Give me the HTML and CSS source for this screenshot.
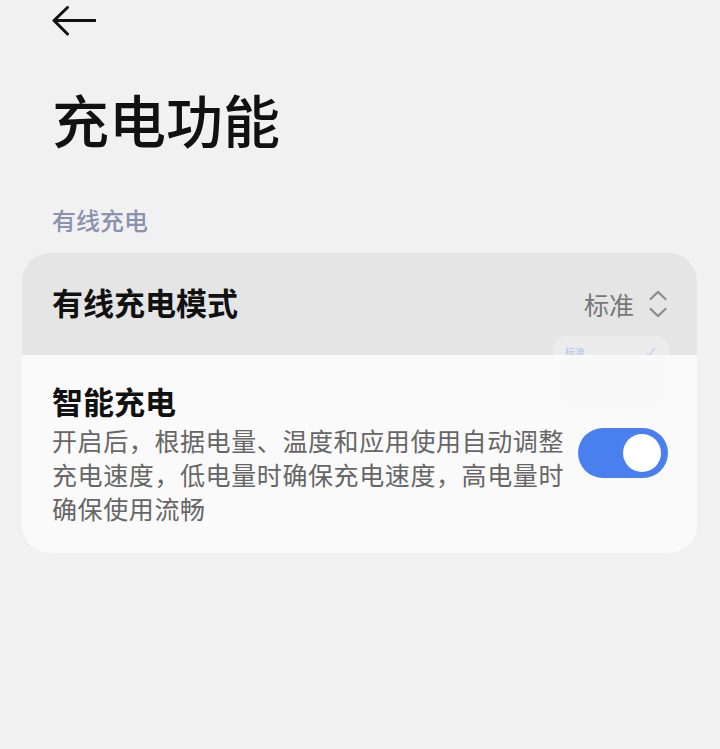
FILE: index.html
```html
<!DOCTYPE html>
<html lang="zh-CN">
<head>
    <meta charset="UTF-8">
    <meta name="viewport" content="width=device-width, initial-scale=1.0">
    <title>充电功能</title>
    <link rel="stylesheet" href="styles.css">
</head>
<body>
    <header class="top-bar">
        <svg class="back-icon" width="44" height="30" viewBox="0 0 44 30">
            <path d="M2 14.5 H43 M15.5 1.5 L2 14.5 L15.5 28" fill="none" stroke="#111" stroke-width="3" stroke-linecap="round" stroke-linejoin="round"/>
        </svg>
    </header>

    <h1 class="page-title">充电功能</h1>

    <p class="section-label">有线充电</p>

    <div class="card">
        <div class="row row-select">
            <span class="row-title">有线充电模式</span>
            <span class="row-value">
                标准
                <svg class="updown" width="20" height="30" viewBox="0 0 20 30">
                    <path d="M2.5 10 L10 3 L17.5 10 M2.5 20 L10 27 L17.5 20" fill="none" stroke="#8a8a8a" stroke-width="2.2" stroke-linecap="round" stroke-linejoin="round"/>
                </svg>
            </span>
        </div>

        <!-- 下拉菜单淡出残影 -->
        <div class="ghost-menu">
            <span>标准</span>
            <span class="ghost-check">✓</span>
        </div>

        <div class="row row-switch">
            <div class="row-text">
                <div class="row-title">智能充电</div>
                <div class="row-desc">开启后，根据电量、温度和应用使用自动调整充电速度，低电量时确保充电速度，高电量时确保使用流畅</div>
            </div>
            <div class="switch on">
                <span class="knob"></span>
            </div>
        </div>
    </div>
</body>
</html>
```

FILE: styles.css
```css
body {
    margin: 0;
    background-color: #f1f1f1;
    font-family: "Noto Sans CJK SC", "Noto Sans", sans-serif;
    color: #111111;
}
.top-bar {
    height: 50px;
    padding-left: 52px;
}
.back-icon {
    display: block;
    margin-top: 6px;
}
.page-title {
    margin: 27px 0 0 52px;
    font-size: 57px;
    line-height: 70px;
    font-weight: 500;
}
.section-label {
    margin: 51px 0 0 52px;
    font-size: 24px;
    line-height: 32px;
    font-weight: 500;
    color: #8a93ae;
}
.card {
    position: relative;
    margin: 17px 23px 0 22px;
    border-radius: 28px;
    overflow: hidden;
    background-color: #fafafa;
}
.row {
    display: flex;
    align-items: center;
    justify-content: space-between;
    padding: 0 29px 0 30px;
}
.row-select {
    height: 102px;
    box-sizing: border-box;
    padding-bottom: 5px;
    background-color: #e5e5e5;
}
.row-title {
    font-size: 31px;
    line-height: 40px;
    font-weight: 700;
    color: #111111;
}
.row-value {
    display: flex;
    align-items: center;
    gap: 14px;
    font-size: 25px;
    color: #777777;
    padding-top: 4px;
}
.ghost-menu {
    position: absolute;
    left: 531px;
    top: 83px;
    width: 116px;
    height: 72px;
    box-sizing: border-box;
    padding: 8px 14px 0 12px;
    display: flex;
    justify-content: space-between;
    border-radius: 14px;
    background-color: #ececec;
    font-size: 10px;
    line-height: 16px;
    color: #b5c4e6;
    z-index: 1;
}
.ghost-check {
    font-size: 12px;
}
.row-switch {
    position: relative;
    z-index: 2;
    padding-top: 26px;
    padding-bottom: 28px;
    gap: 12px;
    background-color: rgba(250, 250, 250, 0.94);
}
.row-text {
    flex: 1;
}
.row-desc {
    margin-top: 2px;
    font-size: 25px;
    line-height: 34px;
    letter-spacing: 0.6px;
    color: #666666;
}
.switch {
    flex: none;
    width: 90px;
    height: 50px;
    border-radius: 25px;
    background-color: #4a7ff0;
    position: relative;
}
.knob {
    position: absolute;
    top: 6px;
    right: 7px;
    width: 38px;
    height: 38px;
    border-radius: 50%;
    background-color: #ffffff;
}
```
